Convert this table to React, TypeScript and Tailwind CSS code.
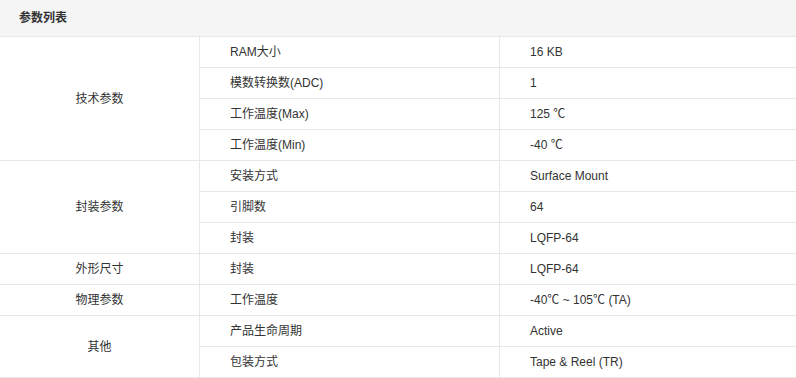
import { Fragment } from "react";

const groups = [
  {
    name: "技术参数",
    rows: [
      ["RAM大小", "16 KB"],
      ["模数转换数(ADC)", "1"],
      ["工作温度(Max)", "125 ℃"],
      ["工作温度(Min)", "-40 ℃"],
    ],
  },
  {
    name: "封装参数",
    rows: [
      ["安装方式", "Surface Mount"],
      ["引脚数", "64"],
      ["封装", "LQFP-64"],
    ],
  },
  { name: "外形尺寸", rows: [["封装", "LQFP-64"]] },
  { name: "物理参数", rows: [["工作温度", "-40℃ ~ 105℃ (TA)"]] },
  {
    name: "其他",
    rows: [
      ["产品生命周期", "Active"],
      ["包装方式", "Tape & Reel (TR)"],
    ],
  },
];

const spans: Record<number, string> = {
  1: "row-span-1",
  2: "row-span-2",
  3: "row-span-3",
  4: "row-span-4",
};

export default function App() {
  return (
    <div className="w-[796px] h-[378px] bg-white text-[12px] text-[#333] font-['Liberation_Sans','Noto_Sans_CJK_SC',sans-serif]">
      {/* Title */}
      <div className="h-[37px] flex items-center pl-[19px] bg-[#f5f5f5] border-b border-[#e8e8e8] font-bold">
        参数列表
      </div>

      {/* Parameter grid: group name spans its rows */}
      <div className="grid grid-cols-[200px_300px_1fr] auto-rows-[31px]">
        {groups.map((g) => (
          <Fragment key={g.name}>
            <div
              className={`${spans[g.rows.length]} flex items-center justify-center border-r border-b border-[#e8e8e8]`}
            >
              {g.name}
            </div>
            {g.rows.map(([label, value], i) => (
              <Fragment key={i}>
                <div className="flex items-center pl-[30px] border-r border-b border-[#e8e8e8]">
                  {label}
                </div>
                <div className="flex items-center pl-[30px] border-b border-[#e8e8e8]">
                  {value}
                </div>
              </Fragment>
            ))}
          </Fragment>
        ))}
      </div>
    </div>
  );
}
